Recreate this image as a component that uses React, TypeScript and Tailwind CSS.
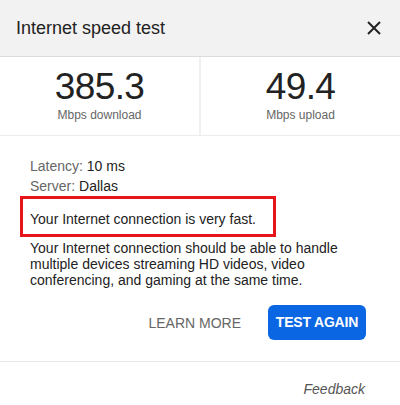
import React from 'react';

function Stat({ value, label }: { value: string; label: string }) {
  return (
    <div className="flex-1 flex flex-col items-center pt-[12px]">
      <div className="text-[37px] leading-[36px] tracking-[-0.6px] text-[#222]">{value}</div>
      <div className="mt-[4px] text-[12px] leading-[12px] text-[#666]">{label}</div>
    </div>
  );
}

export default function App() {
  return (
    <div
      className="w-[400px] h-[405px] bg-white flex flex-col text-[#222]"
      style={{ fontFamily: '"Liberation Sans", Arial, sans-serif' }}
    >
      <header className="h-[57px] shrink-0 bg-[#f2f2f2] border-b border-[#dcdcdc] flex items-center justify-between pl-4 pr-[19px]">
        <h1 className="text-[18px] leading-6 text-[#222]">Internet speed test</h1>
        <button aria-label="Close" className="w-[14px] h-[14px] flex items-center justify-center">
          <svg width="14" height="14" viewBox="0 0 14 14">
            <path d="M1 1 L13 13 M13 1 L1 13" stroke="#222" strokeWidth="2" />
          </svg>
        </button>
      </header>

      <div className="h-[79px] shrink-0 flex border-b border-[#ececec]">
        <Stat value="385.3" label="Mbps download" />
        <div className="w-[2px] bg-[#f0f0f0]" />
        <Stat value="49.4" label="Mbps upload" />
      </div>

      <div className="px-[30px] pt-[20px] pb-[21px] text-[14px] border-b border-[#e6e6e6]">
        <p className="leading-[20px]">
          <span className="text-[#666]">Latency:</span> 10 ms
        </p>
        <p className="leading-[20px]">
          <span className="text-[#666]">Server:</span> Dallas
        </p>
        <div className="ml-[-10px] w-[256px] border-[3px] border-[#e8141b] pl-[7px] pt-[10px] pb-[5px] leading-[20px]">
          Your Internet connection is very fast.
        </div>
        <p className="mt-[3px] leading-[16px]">
          Your Internet connection should be able to handle multiple devices streaming HD videos, video
          conferencing, and gaming at the same time.
        </p>
        <div className="mt-[17px] mr-[4px] flex items-center justify-end gap-[27px]">
          <button className="text-[14px] text-[#666] leading-5">LEARN MORE</button>
          <button className="h-[35px] w-[98px] rounded-[6px] bg-[#0a66e2] text-white text-[14px] font-bold tracking-[-0.2px]">
            TEST AGAIN
          </button>
        </div>
      </div>

      <div className="flex justify-end pt-[17px] pr-[35px]">
        <span className="italic text-[14px] leading-[20px] text-[#555]">Feedback</span>
      </div>
    </div>
  );
}
